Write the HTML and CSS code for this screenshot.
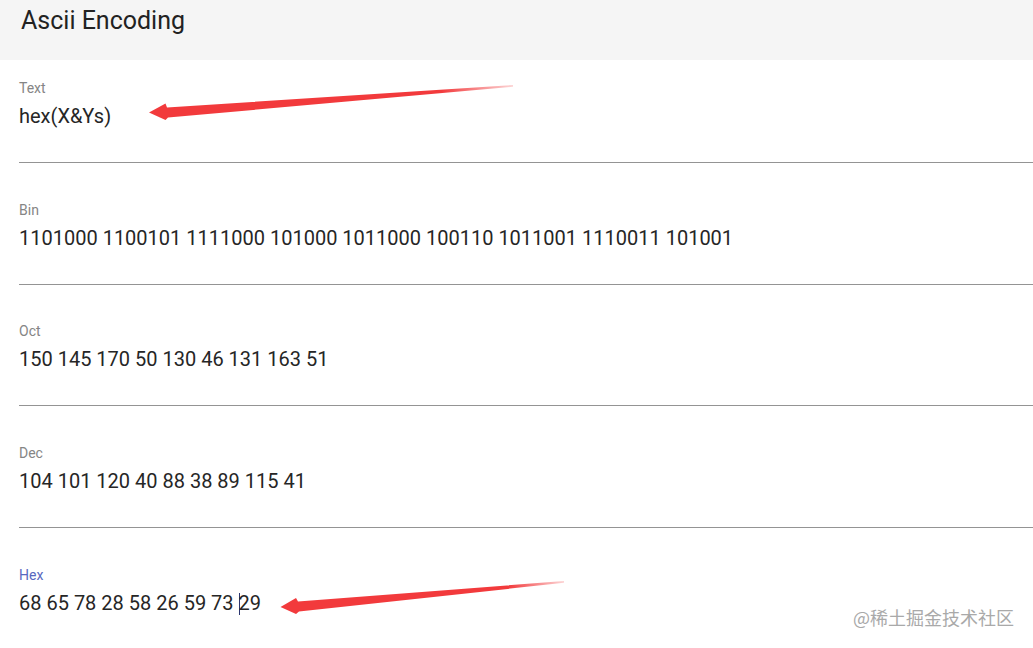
FILE: index.html
```html
<!DOCTYPE html>
<html lang="en">
<head>
<meta charset="utf-8">
<title>Ascii Encoding</title>
<link rel="stylesheet" href="styles.css">
</head>
<body>
<div class="page">
  <header class="header"><h1 class="title">Ascii Encoding</h1></header>
  <main class="fields">
    <div class="field">
      <div class="label">Text</div>
      <div class="value">hex(X&amp;Ys)</div>
    </div>
    <div class="field">
      <div class="label">Bin</div>
      <div class="value">1101000 1100101 1111000 101000 1011000 100110 1011001 1110011 101001</div>
    </div>
    <div class="field">
      <div class="label">Oct</div>
      <div class="value">150 145 170 50 130 46 131 163 51</div>
    </div>
    <div class="field">
      <div class="label">Dec</div>
      <div class="value">104 101 120 40 88 38 89 115 41</div>
    </div>
    <div class="field field-focused">
      <div class="label">Hex</div>
      <div class="value">68 65 78 28 58 26 59 73 <span class="caret"></span>29</div>
    </div>
  </main>
  <svg class="arrows" width="1033" height="648" viewBox="0 0 1033 648" xmlns="http://www.w3.org/2000/svg">
    <defs>
      <linearGradient id="fade1" gradientUnits="userSpaceOnUse" x1="150" y1="0" x2="514" y2="0">
        <stop offset="0" stop-color="#f23a3c"/>
        <stop offset="0.8" stop-color="#f23a3c"/>
        <stop offset="1" stop-color="#f23a3c" stop-opacity="0.2"/>
      </linearGradient>
      <linearGradient id="fade2" gradientUnits="userSpaceOnUse" x1="281" y1="0" x2="565" y2="0">
        <stop offset="0" stop-color="#f23a3c"/>
        <stop offset="0.8" stop-color="#f23a3c"/>
        <stop offset="1" stop-color="#f23a3c" stop-opacity="0.2"/>
      </linearGradient>
    </defs>
    <polygon fill="url(#fade1)" points="149,112.5 165.5,103.5 167,107.5 513,85 513,86.8 168,117.5 165.5,120"/>
    <polygon fill="url(#fade2)" points="280.5,607 296,598 298,601.5 564,581 564,582.8 299,611.5 296,614"/>
  </svg>
  <div class="watermark">@稀土掘金技术社区</div>
</div>
</body>
</html>
```

FILE: styles.css
```css
html, body {
  margin: 0;
  padding: 0;
  background: #ffffff;
}

body {
  font-family: Roboto, "Noto Sans", "Liberation Sans", sans-serif;
  color: #212121;
  overflow: hidden;
}

.page {
  position: relative;
  width: 1033px;
  height: 648px;
  overflow: hidden;
}

.header {
  height: 60px;
  background: #f5f5f5;
  padding: 0 21px;
  box-sizing: border-box;
}

.title {
  margin: 0;
  padding-top: 6px;
  font-size: 25px;
  font-weight: 400;
  line-height: 30px;
  color: #222222;
}

.fields {
  display: flex;
  flex-direction: column;
  gap: 38.7px;
  padding: 20px 0 0 19px;
}

.field {
  padding-bottom: 34px;
  border-bottom: 1px solid #949494;
}

.label {
  font-size: 14px;
  line-height: 16px;
  color: #858585;
}

.field-focused .label {
  color: #5868c0;
}

.field-focused {
  border-bottom-color: #5868c0;
}

.value {
  margin-top: 8px;
  font-size: 20px;
  line-height: 24px;
  color: #262626;
  white-space: nowrap;
}

.caret {
  display: inline-block;
  width: 1px;
  height: 22px;
  margin-right: -1px;
  background: #2b3570;
  vertical-align: -5px;
}

.arrows {
  position: absolute;
  left: 0;
  top: 0;
  pointer-events: none;
}

.watermark {
  position: absolute;
  left: 853px;
  top: 605px;
  font-family: "Noto Sans CJK SC", "Noto Sans", sans-serif;
  font-size: 18px;
  line-height: 24px;
  color: #a9a9a9;
  white-space: nowrap;
}
```
